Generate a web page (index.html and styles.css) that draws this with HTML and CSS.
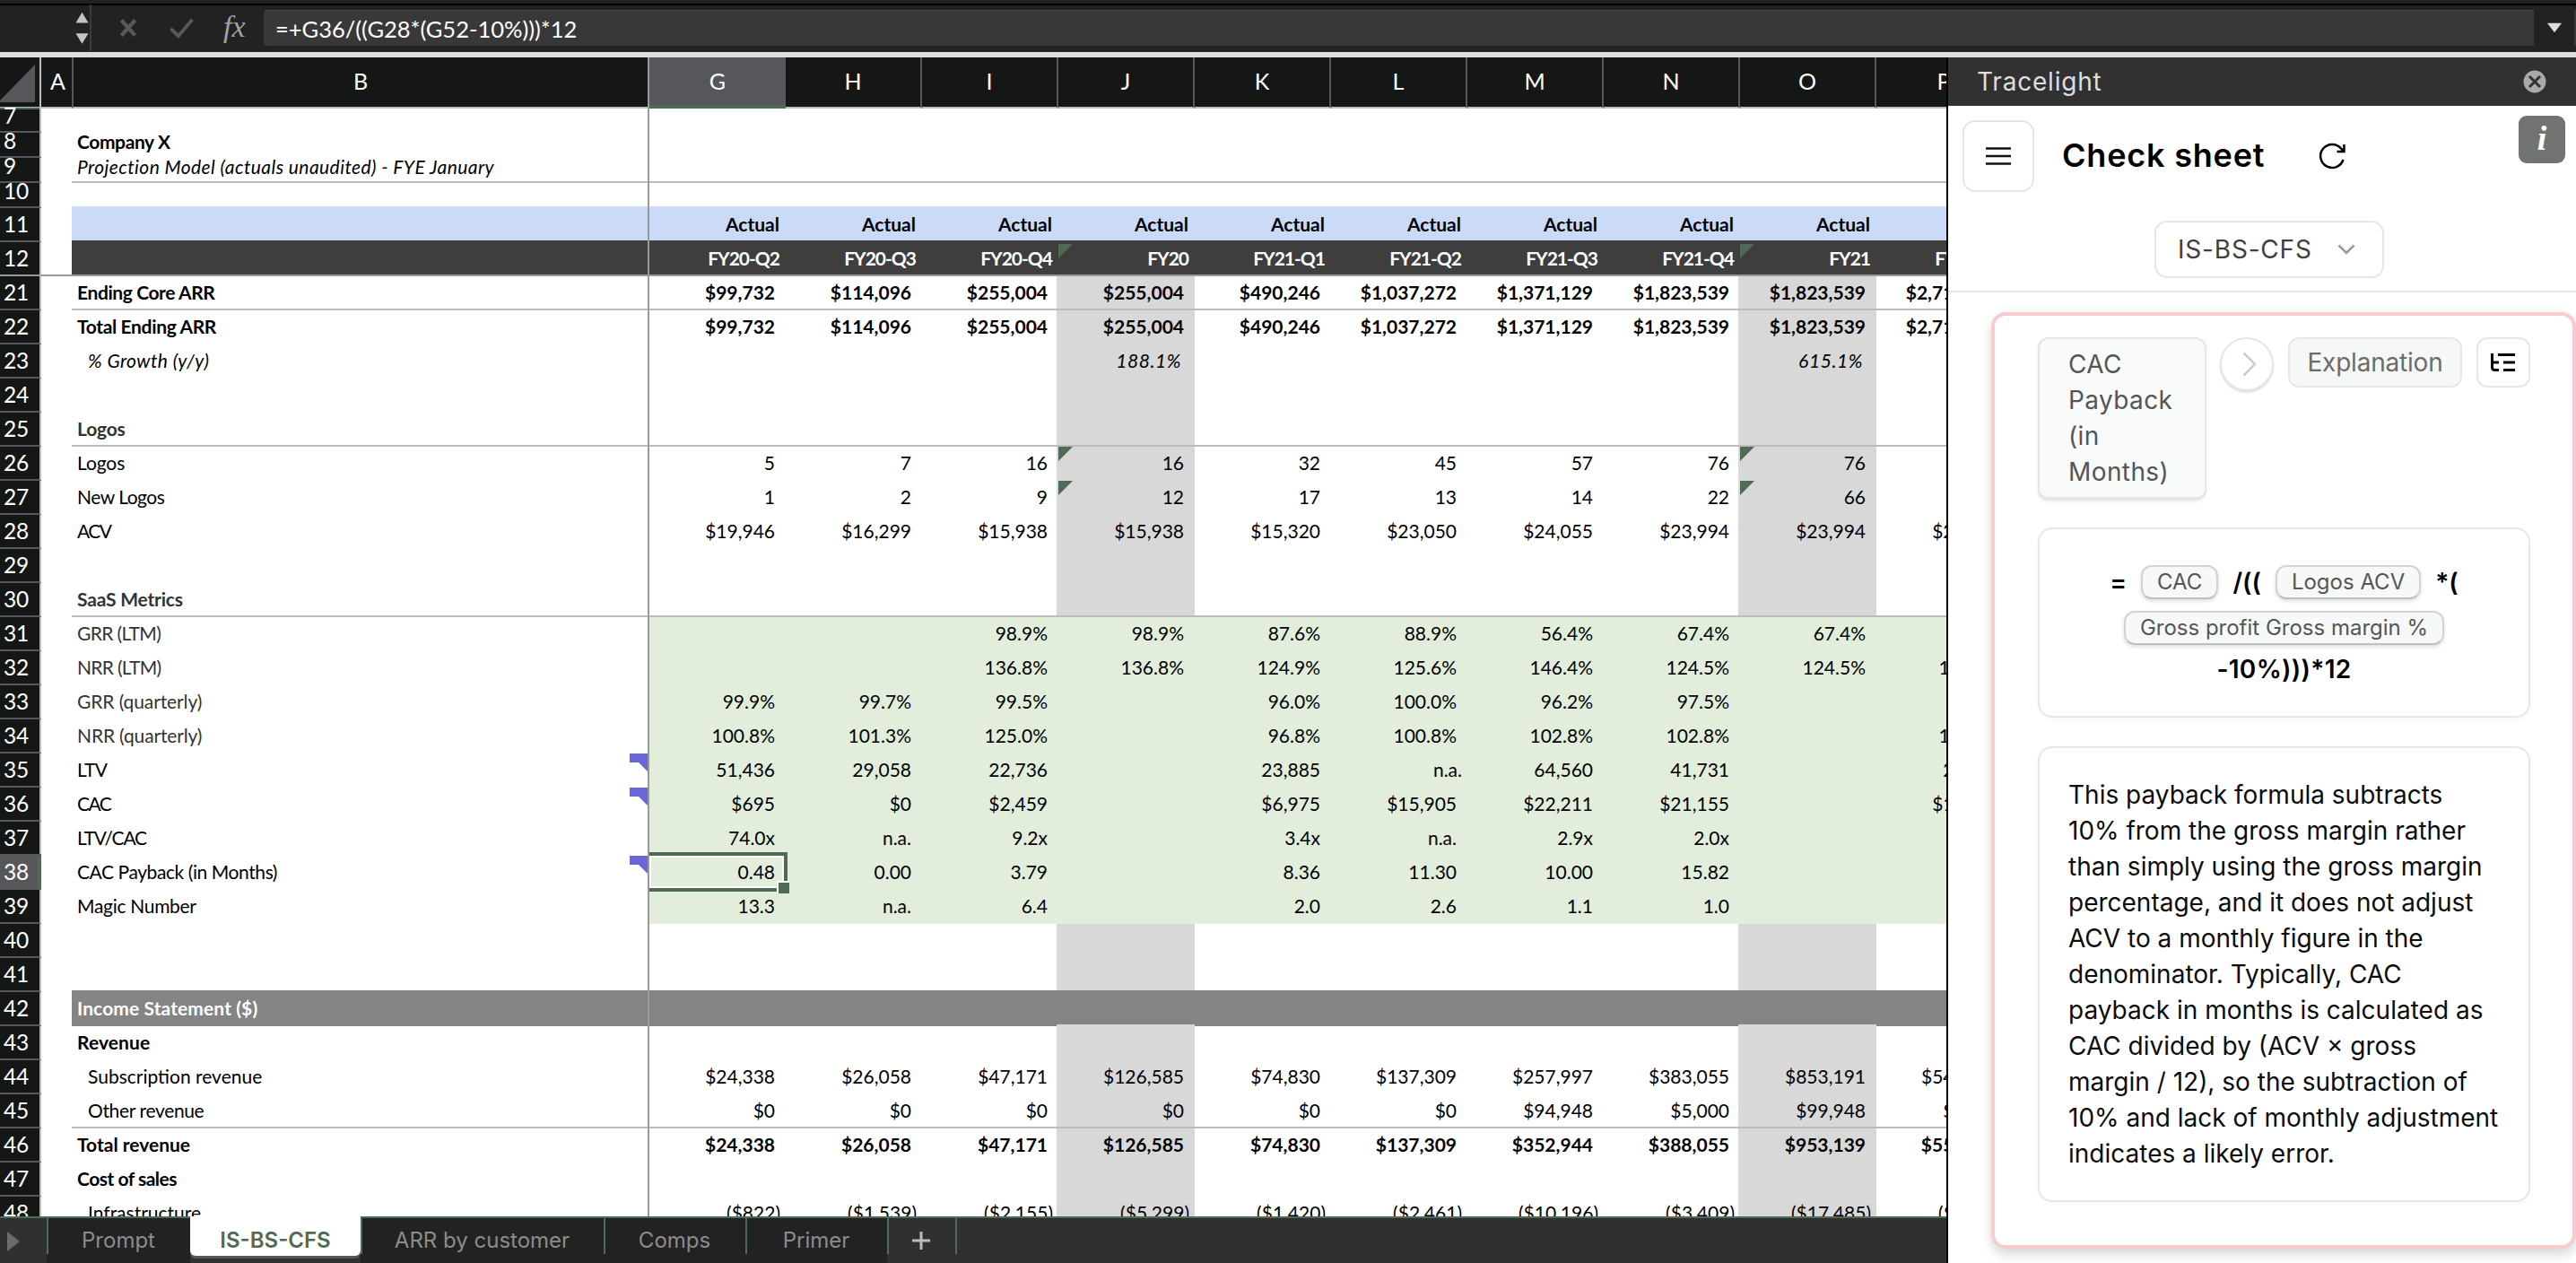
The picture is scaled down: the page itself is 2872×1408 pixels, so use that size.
FILE: index.html
```html
<!DOCTYPE html>
<html lang="en">
<head>
<meta charset="utf-8">
<title>Projection Model</title>
<link rel="stylesheet" href="styles.css">
</head>
<body>
<div class="app">
  <header class="formula-bar">
    <div class="name-box">
      <svg class="stepper" viewBox="0 0 16 38"><path d="M8 0L15.5 12.500H.5zM8 37.500L.5 25H15.500z"/></svg>
    </div>
    <svg class="fb-icon" viewBox="0 0 26 26"><path d="M4 3L22 23M22 3L4 23" stroke-width="5"/></svg>
    <svg class="fb-icon check" viewBox="0 0 30 26"><path d="M2 14L11 23L28 3" stroke-width="4"/></svg>
    <span class="fx">fx</span>
    <div class="formula-input"><span class="formula-text">=+G36/((G28*(G52-10%)))*12</span></div>
    <div class="expand"><svg viewBox="0 0 18 12"><path d="M0 0H18L9 12z"/></svg></div>
  </header>
  <main class="body">
    <section class="workbook">
      <div class="sheet" id="sheet"></div>
      <nav class="tabs">
        <div class="tab-scroll"><svg viewBox="0 0 14 22"><path d="M0 0L14 11L0 22z"/></svg></div>
        <div class="tab" style="width:160px">Prompt</div>
        <div class="tab active">IS-BS-CFS</div>
        <div class="tab" style="width:271px">ARR by customer</div>
        <div class="tab" style="width:158px">Comps</div>
        <div class="tab" style="width:158px">Primer</div>
        <div class="tab add"><svg viewBox="0 0 20 20"><path d="M10 0V20M0 10H20"/></svg></div>
        <div class="tab-end"></div>
      </nav>
    </section>
    <aside class="pane">
      <div class="pane-title"><span>Tracelight</span>
        <svg viewBox="0 0 28 28"><circle cx="14" cy="14" r="14"/><path d="M8 8L20 20M20 8L8 20"/></svg>
      </div>
      <div class="pane-head">
        <div class="head-row">
          <button class="menu"><svg viewBox="0 0 28 20"><path d="M0 1.500H28M0 10H28M0 18.500H28"/></svg></button>
          <h1>Check sheet</h1>
          <svg class="refresh" viewBox="0 0 32 32"><path d="M28.500 20A13 13 0 1 1 26 7.500L29.500 11M29.500 3V11H21.500"/></svg>
          <div class="info">i</div>
        </div>
        <div class="select"><span>IS-BS-CFS</span><svg viewBox="0 0 20 12"><path d="M1.500 1.500L10 10L18.500 1.500"/></svg></div>
      </div>
      <div class="pane-body">
        <article class="card">
          <div class="card-top">
            <div class="chip-cell">CAC<br>Payback<br>(in<br>Months)</div>
            <div class="next"><svg viewBox="0 0 16 28"><path d="M1.500 1.500L14 14L1.500 26.500"/></svg></div>
            <div class="chip-exp"><span>Explanation</span></div>
            <div class="tree"><svg viewBox="0 0 28 20"><path d="M1.500 0V15.500Q1.500 18.500 5 18.500H9M1.500 10H9M8 1.500H27M14 10H27M14 18.500H27"/></svg></div>
          </div>
          <div class="box formula">
            <div class="fline"><b>=</b><span class="pill">CAC</span><b>/((</b><span class="pill">Logos ACV</span><b>*(</b></div>
            <div class="fline"><span class="pill">Gross profit Gross margin %</span></div>
            <div class="fline last"><b>-10%)))*12</b></div>
          </div>
          <div class="box text">This payback formula subtracts<br>10% from the gross margin rather<br>than simply using the gross margin<br>percentage, and it does not adjust<br>ACV to a monthly figure in the<br>denominator. Typically, CAC<br>payback in months is calculated as<br>CAC divided by (ACV × gross<br>margin / 12), so the subtraction of<br>10% and lack of monthly adjustment<br>indicates a likely error.</div>
        </article>
      </div>
    </aside>
  </main>
</div>
<script src="script.js"></script>
</body>
</html>
```
FILE: styles.css
```css
* { box-sizing: border-box; }
body { margin: 0; width: 2872px; height: 1408px; overflow: hidden; font-family: Inter, "Liberation Sans", sans-serif; background: #fff; }
button { font: inherit; padding: 0; }
svg { display: block; fill: none; }
.app { display: flex; flex-direction: column; height: 1408px; }

/* formula bar */
.formula-bar { height: 64px; flex: none; display: flex; align-items: center; background: #222; padding-top: 4px; padding-bottom: 4px; border-top: 4px solid #222; border-bottom: 6px solid #ddd; box-shadow: inset 0 2px #000; }
.name-box { width: 102px; height: 52px; border-right: 2px solid #3c3c3c; display: flex; align-items: center; justify-content: flex-end; padding-right: 1px; }
.stepper { width: 15px; height: 37px; fill: #c4c4c4; }
.fb-icon { width: 24px; height: 22px; margin-left: 29px; stroke: #58595b; }
.fb-icon.check { width: 29px; height: 24px; margin-left: 33px; }
.fx { font: italic 34px "Liberation Serif", serif; color: #a0a0a0; margin-left: 32px; width: 45px; line-height: 40px; margin-top: -3px; }
.formula-input { flex: 1; height: 40px; background: #383838; border-radius: 4px 0 0 4px; color: #fff; font: 25.500px/40px Lato, sans-serif; padding-left: 13px; border-top: 1px solid #444; }
.expand { width: 47px; height: 40px; display: flex; align-items: center; justify-content: center; border-right: 2px solid #383838; }
.expand svg { width: 16px; height: 12px; fill: #ddd; }

.body { flex: 1; display: flex; min-height: 0; }
.workbook { width: 2172px; border-right: 2px solid #000; display: flex; flex-direction: column; overflow: hidden; }

/* sheet */
.sheet { flex: 1; min-height: 0; overflow: hidden; font-family: Lato, Carlito, sans-serif; font-size: 21px; color: #000; background: #fff; }
.row { display: grid; grid-template-columns: 46px 34px 642px 2px repeat(10, 152px); height: 38px; position: relative; white-space: pre; }
.row.short { height: 28px; }
.cell { border-bottom: 2px solid transparent; line-height: 35px; text-align: right; padding-right: 12px; overflow: visible; position: relative; }
.short .cell { line-height: 20px; }
.cell.num { background: #151716; color: #fff; text-align: left; padding: 0 0 0 4px; font-size: 24.500px; line-height: 36px; letter-spacing: -.3px; border-bottom-color: #56575b; border-right: 2px solid #bdbdbd; }
.short .cell.num { line-height: 17px; }
.first .num { box-shadow: inset 0 2px #506b55; }
.cell.b { text-align: left; padding: 0 0 0 6px; }
.cell.freeze { background: #999; padding: 0; border: 0; }
.bold .cell:not(.num) { font-weight: 700; }
.italic .cell:not(.num) { font-style: italic; letter-spacing: .42px; }
.italic .cell.v { padding-right: 15px; letter-spacing: .6px; }
.soft .b { color: #333; }
.indent .b { padding-left: 18px; }
.line .cell:not(.num, .a) { border-bottom-color: #bcbcbc; }
.cell.gray { background: #d8d8d8; margin-left: -2px; }
.cell.pos { padding-right: 6px; }
.green .cell.v { background: #e2eedb; }
.blue .cell.b, .blue .cell.v { background: #cbdaf7; border-bottom-color: #3d3e3d; }
.blue .v, .dark .v { padding-right: 7px; }
.dark .v { letter-spacing: -1px; }
.preblue .b, .preblue .v { border-bottom-color: #cbdaf7; }
.dark .b, .dark .v { background: #3d3e3d; color: #fff; }
.dark .cell, .dark .cell.num { border-bottom-color: #999; }
.presection .cell.b, .presection .cell.v { border-bottom-color: #848484; }
.section .b, .section .v { background: #848484; color: #fff; }
.section .v.jo { border-bottom-color: #d8d8d8; margin-left: -2px; }
.err::before { content: ""; position: absolute; left: 2px; top: 0; width: 16px; height: 16px; background: #506b55; clip-path: polygon(0 0, 100% 0, 0 100%); }
.dark .err::before { left: 0; top: 2px; }
.note::after { content: ""; position: absolute; right: 0; top: 0; width: 20px; height: 20px; background: #6a68d6; clip-path: polygon(0 0, 100% 0, 100% 100%, 50% 50%, 0 50%); }
.current .num { background: #56575b; border-right: 4px solid #506b55; box-shadow: 0 -2px #56575b; }
.selection { position: absolute; left: 724px; top: -4px; width: 154px; height: 44px; border: 4px solid #506b55; border-left: 0; box-shadow: inset 0 0 0 2px #fff; z-index: 2; }
.selection::after { content: ""; position: absolute; right: -6px; bottom: -6px; width: 12px; height: 12px; background: #506b55; border: solid #fff; border-width: 2px 0 0 2px; }

.colhead { height: 56px; }
.colhead .cell { background: #151716; color: #fff; font-size: 25px; line-height: 53px; text-align: center; padding: 0; border-bottom-color: #bdbdbd; border-right: 2px solid #56575b; }
.colhead .cell.col-a { padding-left: 3px; border-right: 0; }
.colhead .cell.b { border-right: 0; border-left: 2px solid #56575b; }
.colhead .corner { border-right-color: #bdbdbd; }
.corner svg { width: 44px; height: 54px; fill: #56575b; }
.colhead .cell.freeze { background: #999; border: 0; }
.colhead .sel { background: #56575b; border-bottom: 4px solid #506b55; border-right: 0; }

/* tabs */
.tabs { height: 52px; flex: none; background: #303030; border-top: 2px solid #506b55; display: flex; }
.tab-scroll { width: 52px; padding: 15px 0 0 8px; }
.tab-scroll svg { width: 14px; height: 22px; fill: #6b6b6b; }
.tab { position: relative; background: #222; color: #8c8c8c; font-size: 24px; line-height: 50px; text-align: center; }
.tab::before, .tab-end::before { content: ""; position: absolute; left: 0; top: 0; width: 2px; height: 40px; background: #506b55; }
.tab.active { width: 190px; height: 44px; margin-top: -2px; padding-top: 2px; background: #fff; color: #506b55; font-weight: 600; border-radius: 0 0 6px 6px; box-shadow: 0 3px #56575b; }
.tab.active::before { display: none; }
.tab.add { width: 76px; background: #303030; display: flex; justify-content: center; padding-top: 15px; }
.tab.add svg { width: 20px; height: 20px; stroke: #bbb; stroke-width: 3; }
.tab-end { position: relative; }

/* task pane */
.pane { flex: 1; display: flex; flex-direction: column; background: #fff; }
.pane-title { height: 54px; background: #313131; color: #dedede; font-size: 28px; letter-spacing: .8px; display: flex; align-items: center; justify-content: space-between; padding: 0 32px; }
.pane-title svg { width: 28px; height: 28px; fill: #a9a9a9; stroke: #313131; stroke-width: 3; }
.pane-head { height: 208px; border-bottom: 2px solid #e6e8e8; padding: 16px 12px 0 16px; display: flex; flex-direction: column; }
.head-row { display: flex; align-items: center; height: 80px; }
.menu { width: 80px; height: 80px; border: 2px solid #e6e6e6; border-radius: 14px; background: #fff; display: flex; align-items: center; justify-content: center; }
.menu svg { width: 28px; height: 20px; stroke: #111; stroke-width: 2.500; }
h1 { margin: -2px 0 0 31px; font-size: 36px; font-weight: 600; letter-spacing: .8px; line-height: 48px; color: #000; width: 285px; white-space: nowrap; }
.refresh { width: 32px; height: 32px; stroke: #000; stroke-width: 2.500; }
.info { margin-left: auto; align-self: flex-start; margin-top: -5px; width: 52px; height: 53px; border-radius: 9px; background: #717373; color: #fff; font: italic bold 38px/50px "Liberation Serif", serif; text-align: center; }
.select { width: 256px; height: 64px; margin: 32px 0 0 214px; border: 2px solid #e6e6e6; border-radius: 14px; display: flex; align-items: center; justify-content: space-between; padding: 0 30px 0 24px; font-size: 28px; letter-spacing: .8px; color: #404040; }
.select svg { width: 20px; height: 12px; stroke: #999; stroke-width: 2.500; }
.pane-body { flex: 1; padding: 22px 0 0 48px; overflow: hidden; }
.card { height: 1044px; border: 4px solid #f8cccc; border-radius: 16px; padding: 24px 47px 0 48px; box-shadow: 0 8px 12px rgba(0,0,0,.12), 0 0 12px rgba(0,0,0,.05); background: #fff; }
.card-top { display: flex; align-items: flex-start; height: 212px; }
.chip-cell { width: 188px; height: 182px; border: 2px solid #e4e6e6; border-bottom-width: 4px; border-radius: 12px; background: #f9fafa; padding: 8px 0 0 32px; font-size: 28px; line-height: 40px; letter-spacing: .4px; color: #545656; box-shadow: 0 2px 4px rgba(0,0,0,.06); }
.next { width: 60px; height: 60px; margin-left: 15px; border: 2px solid #e4e6e6; border-radius: 50%; display: flex; align-items: center; justify-content: center; padding-left: 6px; box-shadow: 0 2px 2px #e0e2e3; background: #fff; }
.next svg { width: 16px; height: 28px; stroke: #ccc; stroke-width: 2.500; }
.chip-exp { width: 194px; height: 56px; margin-left: 16px; border: 2px solid #e6e8e8; border-radius: 12px; background: #f6f8f7; color: #6a6c6c; font-size: 28px; letter-spacing: -.2px; line-height: 53px; text-align: center; }
.tree { width: 60px; height: 56px; margin-left: 16px; border: 2px solid #e6e8e8; border-radius: 12px; display: flex; align-items: center; justify-content: center; }
.tree svg { width: 28px; height: 20px; stroke: #000; stroke-width: 3; }
.box { border: 2px solid #e6e8e8; border-radius: 16px; box-shadow: 0 2px 4px rgba(0,0,0,.04); }
.box.formula { height: 212px; padding-top: 37px; }
.fline { display: flex; justify-content: center; align-items: center; gap: 16px; height: 58px; font-size: 28px; }
.fline:first-child { height: 44px; }
.fline.last { height: 34px; letter-spacing: .3px; }
.fline b { font-weight: 600; white-space: nowrap; }
.pill { height: 38px; border: 2px solid #d2d4d4; border-bottom-color: #bfc1c1; border-radius: 12px; background: #f7f9f8; color: #545656; font-size: 24px; line-height: 33px; padding: 0 16px; box-shadow: 0 2px 4px rgba(0,0,0,.14); white-space: nowrap; }
.box.text { height: 508px; margin-top: 32px; padding: 32px 0 0 32px; font-size: 28px; line-height: 40px; color: #0c0c0c; white-space: nowrap; }
```
FILE: script.js
```js
const sheet = document.getElementById('sheet');
const letters = ['G', 'H', 'I', 'J', 'K', 'L', 'M', 'N', 'O', 'P'];

// row number, label, row classes, values for columns G to P, error flags, label tracking
const rows = [
  [7, '', 'short first'],
  [8, 'Company X', 'short bold', '', '', -.4],
  [9, 'Projection Model (actuals unaudited) - FYE January', 'short italic line'],
  [10, '', 'short preblue'],
  [11, '', 'bold blue', 'Actual|Actual|Actual|Actual|Actual|Actual|Actual|Actual|Actual|'],
  [12, '', 'bold dark', 'FY20-Q2|FY20-Q3|FY20-Q4|FY20|FY21-Q1|FY21-Q2|FY21-Q3|FY21-Q4|FY21|FY22-Q1', 'e'],
  [21, 'Ending Core ARR', 'bold line shade', '$99,732|$114,096|$255,004|$255,004|$490,246|$1,037,272|$1,371,129|$1,823,539|$1,823,539|$2,710,234', '', -.4],
  [22, 'Total Ending ARR', 'bold shade', '$99,732|$114,096|$255,004|$255,004|$490,246|$1,037,272|$1,371,129|$1,823,539|$1,823,539|$2,710,234', '', -.35],
  [23, '% Growth (y/y)', 'italic indent shade', '|||188.1%|||||615.1%|'],
  [24, '', 'shade'],
  [25, 'Logos', 'bold soft line shade', '', '', -.2],
  [26, 'Logos', 'shade', '5|7|16|16|32|45|57|76|76|', 'e', -.1],
  [27, 'New Logos', 'shade', '1|2|9|12|17|13|14|22|66|', 'e', -.5],
  [28, 'ACV', 'shade', '$19,946|$16,299|$15,938|$15,938|$15,320|$23,050|$24,055|$23,994|$23,994|$26,055', '', -1.500],
  [29, '', 'shade'],
  [30, 'SaaS Metrics', 'bold soft line shade', '', '', -.2],
  [31, 'GRR (LTM)', 'soft green', '||98.9%|98.9%|87.6%|88.9%|56.4%|67.4%|67.4%|', '', -.65],
  [32, 'NRR (LTM)', 'soft green', '||136.8%|136.8%|124.9%|125.6%|146.4%|124.5%|124.5%|120.1%', '', -.7],
  [33, 'GRR (quarterly)', 'soft green', '99.9%|99.7%|99.5%||96.0%|100.0%|96.2%|97.5%||', '', -.1],
  [34, 'NRR (quarterly)', 'soft green', '100.8%|101.3%|125.0%||96.8%|100.8%|102.8%|102.8%||103.1%', '', -.15],
  [35, 'LTV', 'green note-row', '51,436|29,058|22,736||23,885|n.a. |64,560|41,731||22,010', '', -.7],
  [36, 'CAC', 'green note-row', '$695|$0|$2,459||$6,975|$15,905|$22,211|$21,155||$18,320', '', -1.600],
  [37, 'LTV/CAC', 'green', '74.0x|n.a.|9.2x||3.4x|n.a.|2.9x|2.0x||', '', -1.200],
  [38, 'CAC Payback (in Months)', 'green note-row current', '0.48|0.00|3.79||8.36|11.30|10.00|15.82||', '', -.42],
  [39, 'Magic Number', 'green', '13.3|n.a.|6.4||2.0|2.6|1.1|1.0||', '', -.3],
  [40, '', 'shade'],
  [41, '', 'shade presection'],
  [42, 'Income Statement ($)', 'bold section', '', '', .1],
  [43, 'Revenue', 'bold shade', '', '', .1],
  [44, 'Subscription revenue', 'indent shade', '$24,338|$26,058|$47,171|$126,585|$74,830|$137,309|$257,997|$383,055|$853,191|$546,210'],
  [45, 'Other revenue', 'indent line shade', '$0|$0|$0|$0|$0|$0|$94,948|$5,000|$99,948|$5,000', '', -.35],
  [46, 'Total revenue', 'bold shade', '$24,338|$26,058|$47,171|$126,585|$74,830|$137,309|$352,944|$388,055|$953,139|$551,210'],
  [47, 'Cost of sales', 'bold shade', '', '', -.5],
  [48, 'Infrastructure', 'indent shade', '($822)|($1,539)|($2,155)|($5,299)|($1,420)|($2,461)|($10,196)|($3,409)|($17,485)|($8,120)']
];

function el(cls, text, parent) {
  const d = document.createElement('div');
  d.className = cls;
  d.textContent = text;
  parent.appendChild(d);
  return d;
}

const head = el('row colhead', '', sheet);
el('cell corner', '', head).innerHTML = '<svg viewBox="0 0 44 54"><path d="M0 48L39 8V50H0z"/></svg>';
el('cell col-a', 'A', head);
el('cell b', 'B', head);
el('cell freeze', '', head);
letters.forEach(l => el('cell' + (l === 'G' ? ' sel' : ''), l, head));

rows.forEach(([n, label, cls, vals, err, tracking]) => {
  const r = el('row ' + cls, '', sheet);
  el('cell num', n, r);
  el('cell a', '', r);
  const b = el('cell b' + (cls.includes('note-row') ? ' note' : ''), label, r);
  if (tracking) b.style.letterSpacing = tracking + 'px';
  el('cell freeze', '', r);
  const v = (vals || '').split('|');
  letters.forEach((l, i) => {
    const text = v[i] || '';
    const jo = l === 'J' || l === 'O';
    let c = 'cell v';
    if (jo && cls.includes('shade')) c += ' gray';
    if (jo) c += ' jo';
    if (jo && err) c += ' err';
    if (text.endsWith(')') || text.endsWith(' ')) c += ' pos';
    el(c, text.trim(), r);
  });
  if (cls.includes('current')) el('selection', '', r);
});
```
